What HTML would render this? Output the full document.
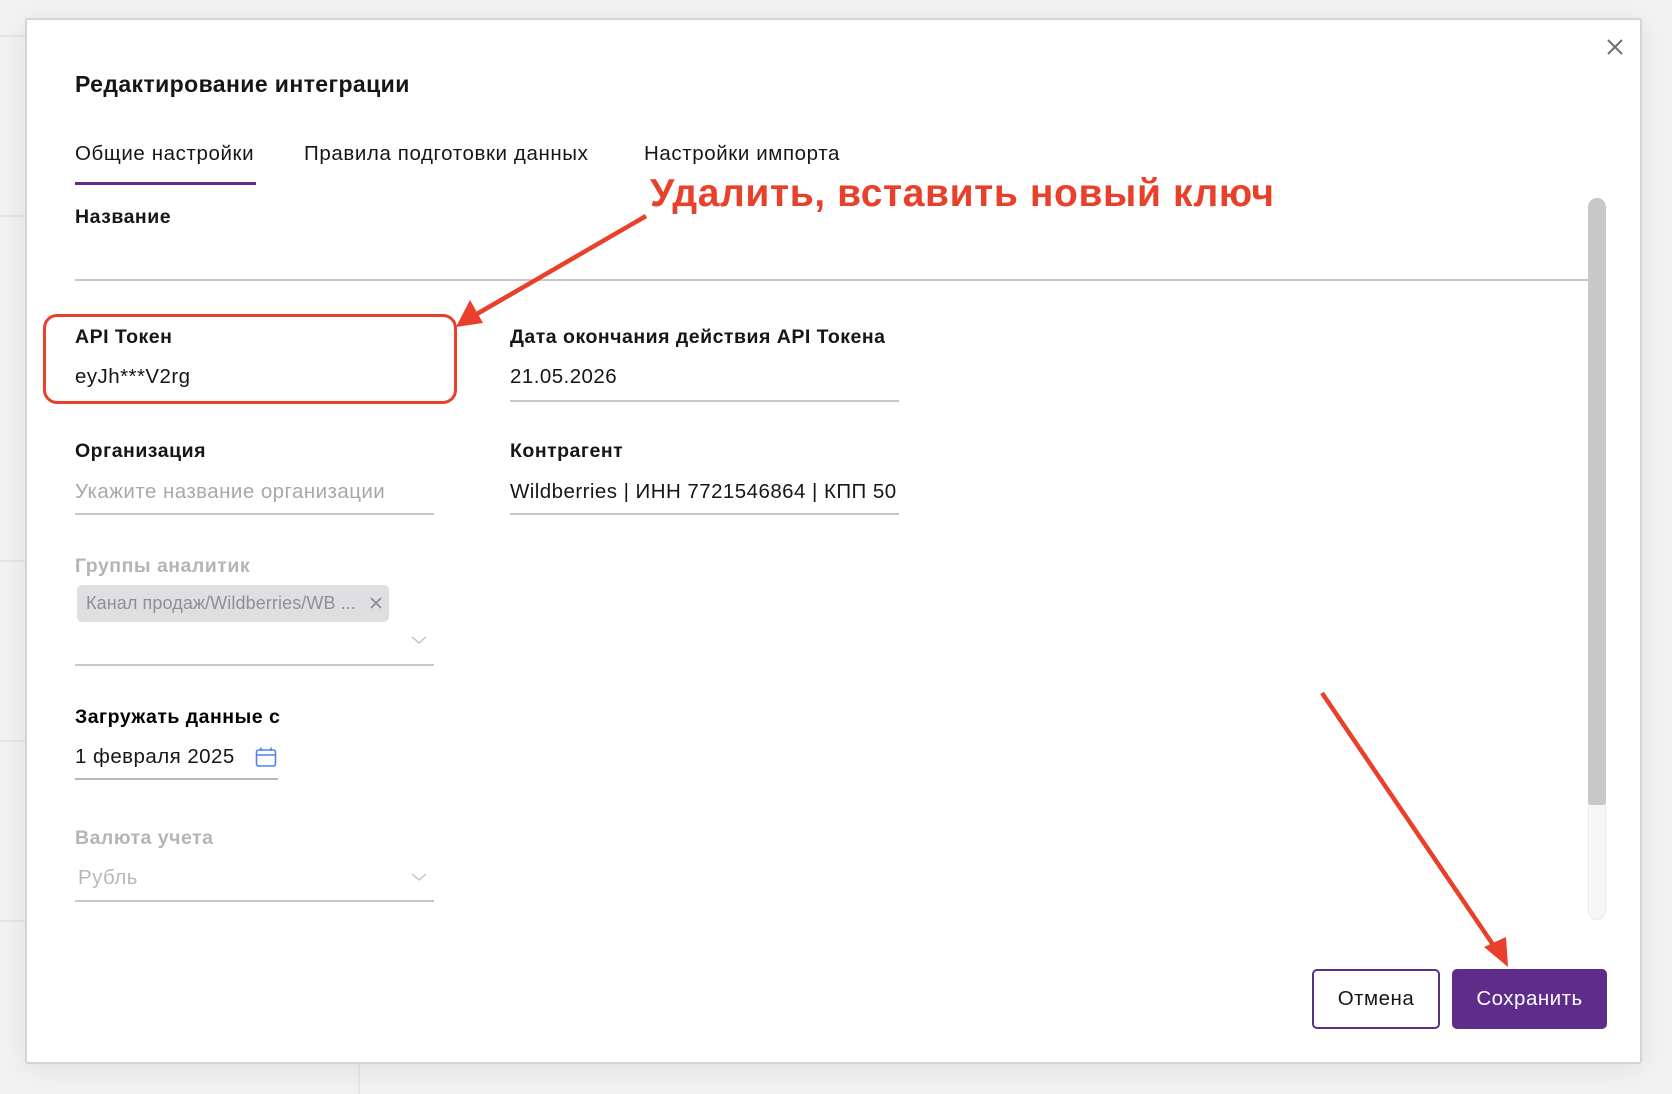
<!DOCTYPE html>
<html><head><meta charset="utf-8"><style>
*{margin:0;padding:0;box-sizing:border-box}
body{width:1672px;height:1094px;background:#f2f2f2;font-family:"Liberation Sans",sans-serif;position:relative;overflow:hidden;color:#161616}
.a{position:absolute;white-space:nowrap}
.modal{position:absolute;left:25px;top:18px;width:1617px;height:1046px;background:#fff;border:2px solid #d4d4d4;border-radius:3px;box-shadow:0 4px 30px rgba(0,0,0,.08)}
.lbl{font-size:19.5px;font-weight:bold;line-height:22px;letter-spacing:.5px}
.val{font-size:20.5px;line-height:24px;letter-spacing:.45px}
.gray{color:#b5b5b9}
.line{position:absolute;height:2px;background:#c6c6c9}
</style></head><body>
<div class="a" style="left:0;top:35px;width:25px;height:2px;background:#e6e6e6"></div>
<div class="a" style="left:0;top:215px;width:25px;height:2px;background:#e6e6e6"></div>
<div class="a" style="left:0;top:560px;width:25px;height:2px;background:#e6e6e6"></div>
<div class="a" style="left:0;top:740px;width:25px;height:2px;background:#e6e6e6"></div>
<div class="a" style="left:0;top:920px;width:25px;height:2px;background:#e6e6e6"></div>
<div class="a" style="left:358px;top:1064px;width:2px;height:30px;background:#e6e6e6"></div>
<div class="modal"></div>

<svg class="a" style="left:1605px;top:37px" width="20" height="20" viewBox="0 0 20 20"><path d="M3 3L17 17M17 3L3 17" stroke="#6f6f74" stroke-width="2"/></svg>

<div class="a" style="left:75px;top:71px;font-size:23px;font-weight:bold;letter-spacing:.4px">Редактирование интеграции</div>

<div class="a val" style="left:75px;top:142px;letter-spacing:.6px">Общие настройки</div>
<div class="a val" style="left:304px;top:142px;letter-spacing:.6px">Правила подготовки данных</div>
<div class="a val" style="left:644px;top:142px;letter-spacing:.6px">Настройки импорта</div>
<div class="a" style="left:75px;top:182px;width:181px;height:3px;background:#5e2d8c"></div>

<div class="a lbl" style="left:75px;top:206px">Название</div>
<div class="line" style="left:75px;top:279px;width:1514px"></div>

<div class="a lbl" style="left:75px;top:326px">API Токен</div>
<div class="a val" style="left:75px;top:365px">eyJh***V2rg</div>
<div class="a" style="left:43px;top:314px;width:414px;height:90px;border:3.5px solid #e8402a;border-radius:14px"></div>

<div class="a lbl" style="left:510px;top:326px">Дата окончания действия API Токена</div>
<div class="a val" style="left:510px;top:365px">21.05.2026</div>
<div class="line" style="left:510px;top:400px;width:389px"></div>

<div class="a lbl" style="left:75px;top:440px">Организация</div>
<div class="a val gray" style="left:75px;top:480px;color:#a8a8ac">Укажите название организации</div>
<div class="line" style="left:75px;top:513px;width:359px"></div>

<div class="a lbl" style="left:510px;top:440px">Контрагент</div>
<div class="a val" style="left:510px;top:480px">Wildberries | ИНН 7721546864 | КПП 50</div>
<div class="line" style="left:510px;top:513px;width:389px"></div>

<div class="a lbl gray" style="left:75px;top:555px">Группы аналитик</div>
<div class="a" style="left:77px;top:585px;width:312px;height:37px;background:#dfdfe1;border-radius:5px"></div>
<div class="a" style="left:86px;top:593px;font-size:18px;letter-spacing:.1px;color:#8f8f94">Канал продаж/Wildberries/WB ...</div>
<svg class="a" style="left:369px;top:596px" width="14" height="14" viewBox="0 0 14 14"><path d="M2 2L12 12M12 2L2 12" stroke="#8a8a8f" stroke-width="1.6"/></svg>
<svg class="a" style="left:410px;top:634px" width="18" height="12" viewBox="0 0 18 12"><path d="M2 3L9 9L16 3" fill="none" stroke="#c2c2c6" stroke-width="1.4"/></svg>
<div class="line" style="left:75px;top:664px;width:359px"></div>

<div class="a lbl" style="left:75px;top:706px;color:#000">Загружать данные с</div>
<div class="a val" style="left:75px;top:745px">1 февраля 2025</div>
<svg class="a" style="left:255px;top:746px" width="22" height="22" viewBox="0 0 22 22"><rect x="1.5" y="4" width="19" height="16" rx="2" fill="none" stroke="#4e83f0" stroke-width="1.6"/><path d="M1.5 9H20.5M6 1.5V5M16 1.5V5" stroke="#4e83f0" stroke-width="1.6"/></svg>
<div class="line" style="left:75px;top:778px;width:203px;background:#b9b9bd"></div>

<div class="a lbl gray" style="left:75px;top:827px">Валюта учета</div>
<div class="a val" style="left:78px;top:866px;color:#b8b8bc">Рубль</div>
<svg class="a" style="left:410px;top:871px" width="18" height="12" viewBox="0 0 18 12"><path d="M2 3L9 9L16 3" fill="none" stroke="#c2c2c6" stroke-width="1.4"/></svg>
<div class="line" style="left:75px;top:900px;width:359px"></div>

<div class="a" style="left:1588px;top:198px;width:18px;height:722px;border-radius:9px;background:#f7f7f7;border:1px solid #ececec"></div>
<div class="a" style="left:1588px;top:198px;width:18px;height:607px;border-radius:9px 9px 3px 3px;background:#c8c8c8"></div>

<div class="a" style="left:1312px;top:969px;width:128px;height:60px;border:2px solid #5e2d8c;border-radius:5px;background:#fff;font-size:20.5px;letter-spacing:.5px;text-align:center;line-height:56px">Отмена</div>
<div class="a" style="left:1452px;top:969px;width:155px;height:60px;background:#5e2d8c;border-radius:5px;color:#fff;font-size:20.5px;letter-spacing:.5px;text-align:center;line-height:60px">Сохранить</div>

<div class="a" style="left:650px;top:172px;font-size:39px;letter-spacing:.6px;font-weight:bold;color:#e8402a">Удалить, вставить новый ключ</div>

<svg class="a" style="left:0;top:0" width="1672" height="1094">
<path d="M646 216L470 318" stroke="#e8402a" stroke-width="4.5"/>
<path d="M456 327L470 300L483 323Z" fill="#e8402a"/>
<path d="M1322 693L1498 952" stroke="#e8402a" stroke-width="4.5"/>
<path d="M1508 967L1484 947L1506 937Z" fill="#e8402a"/>
</svg>
</body></html>
